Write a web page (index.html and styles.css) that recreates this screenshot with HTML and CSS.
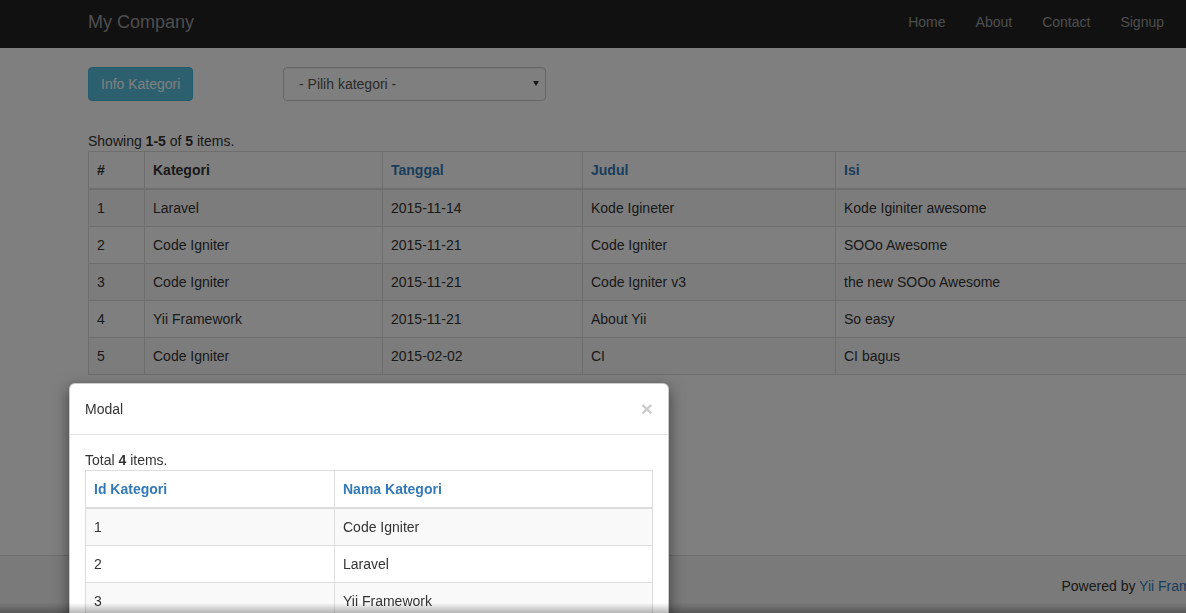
FILE: index.html
```html
<!DOCTYPE html>
<html>
<head>
<meta charset="utf-8">
<title>Kategori</title>
<link rel="stylesheet" href="styles.css">
</head>
<body>
<div class="page">
  <nav class="navbar">
    <a class="brand">My Company</a>
    <ul class="nav">
      <li><a>Home</a></li>
      <li><a>About</a></li>
      <li><a>Contact</a></li>
      <li><a>Signup</a></li>
    </ul>
  </nav>
  <main class="main">
    <div class="toolbar">
      <div><button class="btn btn-info">Info Kategori</button></div>
      <span class="select-wrap">
        <select class="form-control"><option>- Pilih kategori -</option></select>
        <svg class="caret" width="6" height="5" viewBox="0 0 6 5"><path d="M0 0H6L3 5Z" fill="#333"/></svg>
      </span>
    </div>
    <div class="summary">Showing <b>1-5</b> of <b>5</b> items.</div>
    <table class="grid grid-main">
      <colgroup>
        <col class="c-no"><col class="c-kat"><col class="c-tgl"><col class="c-jdl"><col>
      </colgroup>
      <thead>
        <tr><th>#</th><th>Kategori</th><th><a>Tanggal</a></th><th><a>Judul</a></th><th><a>Isi</a></th></tr>
      </thead>
      <tbody>
        <tr><td>1</td><td>Laravel</td><td>2015-11-14</td><td>Kode Igineter</td><td>Kode Iginiter awesome</td></tr>
        <tr><td>2</td><td>Code Igniter</td><td>2015-11-21</td><td>Code Igniter</td><td>SOOo Awesome</td></tr>
        <tr><td>3</td><td>Code Igniter</td><td>2015-11-21</td><td>Code Igniter v3</td><td>the new SOOo Awesome</td></tr>
        <tr><td>4</td><td>Yii Framework</td><td>2015-11-21</td><td>About Yii</td><td>So easy</td></tr>
        <tr><td>5</td><td>Code Igniter</td><td>2015-02-02</td><td>CI</td><td>CI bagus</td></tr>
      </tbody>
    </table>
  </main>
  <footer class="footer">
    <div class="footer-inner">
      <p>&copy; My Company 2015</p>
      <p>Powered by <a>Yii Framework</a></p>
    </div>
  </footer>
</div>

<div class="backdrop"></div>

<div class="modal">
  <div class="modal-header">
    <span class="modal-title">Modal</span>
    <button class="close">&times;</button>
  </div>
  <div class="modal-body">
    <div class="summary-sm">Total <b>4</b> items.</div>
    <table class="grid grid-modal">
      <colgroup><col class="c-id"><col></colgroup>
      <thead>
        <tr><th><a>Id Kategori</a></th><th><a>Nama Kategori</a></th></tr>
      </thead>
      <tbody>
        <tr><td>1</td><td>Code Igniter</td></tr>
        <tr><td>2</td><td>Laravel</td></tr>
        <tr><td>3</td><td>Yii Framework</td></tr>
        <tr><td>4</td><td>Symfony</td></tr>
      </tbody>
    </table>
  </div>
</div>

<div class="edge-fade"></div>
</body>
</html>
```

FILE: styles.css
```css
html, body {
  margin: 0;
  padding: 0;
  overflow: hidden;
}
body {
  font-family: "Liberation Sans", Arial, Helvetica, sans-serif;
  font-size: 14px;
  line-height: 20px;
  color: #333;
  background: #fff;
}
a { color: #337ab7; text-decoration: none; }
b { font-weight: bold; }

.page {
  height: 615px;
  display: flex;
  flex-direction: column;
  width: 1300px;
}

/* navbar */
.navbar {
  height: 48px;
  background: #222;
  display: flex;
  align-items: flex-start;
  padding: 0 114px 0 73px;
  width: 1113px;
  box-sizing: content-box;
}
.brand {
  color: #9d9d9d;
  font-size: 18px;
  line-height: 20px;
  padding: 12px 15px;
}
.nav {
  list-style: none;
  margin: 0 7px 0 auto;
  padding: 0;
  display: flex;
}
.nav a {
  display: block;
  color: #9d9d9d;
  padding: 12px 15px;
  line-height: 20px;
}

/* main */
.main {
  flex: 1;
  padding: 19px 0 0 88px;
}
.toolbar {
  display: grid;
  grid-template-columns: 195px 263px;
  align-items: start;
}
.btn {
  font-family: inherit;
  font-size: 14px;
  line-height: 20px;
  padding: 6px 12px;
  border: 1px solid transparent;
  border-radius: 4px;
  cursor: pointer;
}
.btn-info {
  background: #5bc0de;
  border-color: #46b8da;
  color: #fff;
}
.select-wrap {
  position: relative;
  display: block;
  width: 263px;
  height: 34px;
}
.form-control {
  display: block;
  height: 34px;
  width: 263px;
  padding: 6px 12px 6px 15px;
  font-family: inherit;
  font-size: 14px;
  color: #555;
  background: #fff;
  border: 1px solid #ccc;
  border-radius: 4px;
  box-shadow: inset 0 1px 1px rgba(0,0,0,.075);
  -webkit-appearance: none;
  appearance: none;
}
.caret {
  position: absolute;
  right: 7px;
  top: 14px;
  pointer-events: none;
}
.summary {
  margin-top: 30px;
}

/* grids */
.grid {
  border-collapse: collapse;
  table-layout: fixed;
}
.grid th, .grid td {
  border: 1px solid #ddd;
  padding: 8px;
  line-height: 20px;
  text-align: left;
  vertical-align: top;
  white-space: nowrap;
  overflow: hidden;
}
.grid thead th {
  border-bottom: 2px solid #ddd;
  font-weight: bold;
}
.grid thead th a { font-weight: bold; }
.grid tbody tr:nth-child(odd) td { background: #f9f9f9; }

.grid-main { width: 1144px; }
.c-no { width: 56px; }
.c-kat { width: 238px; }
.c-tgl { width: 200px; }
.c-jdl { width: 253px; }

/* footer */
.footer {
  height: 60px;
  box-sizing: border-box;
  border-top: 1px solid #ddd;
  background: #f5f5f5;
  padding-top: 20px;
}
.footer-inner {
  margin-left: 88px;
  width: 1140px;
  display: flex;
  justify-content: space-between;
}
.footer-inner p { margin: 0; }

/* backdrop + modal */
.backdrop {
  position: fixed;
  inset: 0;
  background: rgba(0,0,0,.5);
}
.modal {
  position: fixed;
  top: 383px;
  left: 69px;
  width: 600px;
  box-sizing: border-box;
  background: #fff;
  border: 1px solid rgba(0,0,0,.2);
  border-radius: 6px;
  box-shadow: 0 5px 15px rgba(0,0,0,.5);
}
.modal-header {
  padding: 15px;
  border-bottom: 1px solid #e5e5e5;
  display: flex;
  align-items: flex-start;
  justify-content: space-between;
}
.modal-title {
  line-height: 20px;
  color: #333;
}
.close {
  background: none;
  border: 0;
  padding: 0;
  margin: 0;
  height: 20px;
  font-family: inherit;
  font-size: 21px;
  font-weight: bold;
  line-height: 20px;
  color: #000;
  opacity: .2;
  cursor: pointer;
}
.modal-body {
  padding: 15px;
}
.summary-sm { line-height: 20px; }
.grid-modal { width: 100%; }
.c-id { width: 249px; }

.edge-fade {
  position: fixed;
  left: 0;
  right: 0;
  bottom: 0;
  height: 10px;
  background: linear-gradient(to bottom, rgba(0,0,0,0), rgba(0,0,0,.28));
}
```
